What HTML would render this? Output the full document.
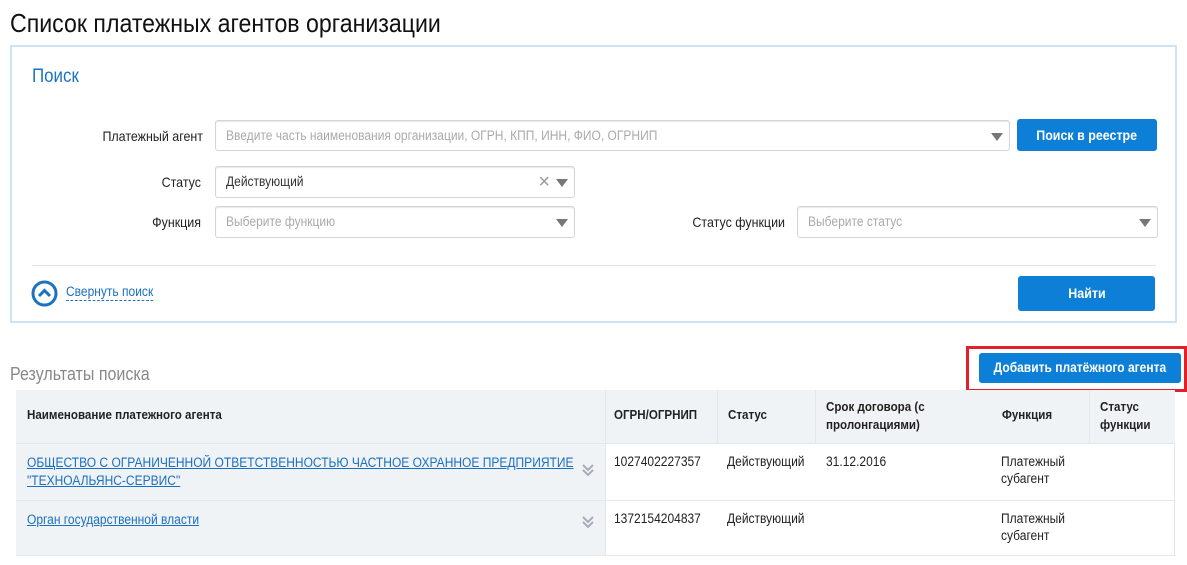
<!DOCTYPE html>
<html><head><meta charset="utf-8"><style>
*{box-sizing:border-box;margin:0;padding:0}
body{width:1187px;height:565px;background:#fff;position:relative;overflow:hidden;font-family:"Liberation Sans",sans-serif;color:#222}
.a{position:absolute;white-space:nowrap}
.t{transform:scaleX(.89);transform-origin:0 0}
.s{display:inline-block;transform:scaleX(.89);transform-origin:0 0;white-space:nowrap}
.inp{position:absolute;border:1px solid #d5d5d5;border-radius:3px;background:#fff;font-size:13.5px;line-height:29px;padding-left:10px;color:#aaa;box-shadow:inset 0 1px 1px rgba(0,0,0,.1)}
.tri{position:absolute;right:6px;top:12px;width:0;height:0;border-left:6px solid transparent;border-right:6px solid transparent;border-top:8px solid #777}
.lbl{position:absolute;font-size:14px;text-align:right;color:#222;transform:scaleX(.89);transform-origin:100% 0;white-space:nowrap}
.btn{position:absolute;background:#0e7fd6;color:#fff;border-radius:3px;font-size:14px;font-weight:bold;text-align:center}
.btn span{display:inline-block;transform:scaleX(.89)}
.c{position:absolute;font-size:13.5px;line-height:18px;white-space:nowrap;transform:scaleX(.89);transform-origin:0 0}
.hd{font-weight:bold;font-size:13px}
a{color:#1a6fc0;text-decoration:underline}
</style></head><body>
<div class="a t" style="left:10px;top:8px;font-size:26px;color:#111">Список платежных агентов организации</div>
<div class="a" style="left:10px;top:45px;width:1167px;height:278px;border:2px solid #cfe3f3"></div>
<div class="a t" style="left:32px;top:66px;font-size:19px;color:#1a73c0">Поиск</div>
<div class="lbl" style="left:60px;top:128px;width:143px">Платежный агент</div>
<div class="inp" style="left:215px;top:120px;width:795px;height:31px"><span class="s">Введите часть наименования организации, ОГРН, КПП, ИНН, ФИО, ОГРНИП</span><div class="tri"></div></div>
<div class="btn" style="left:1017px;top:119px;width:140px;height:32px;line-height:32px"><span>Поиск в реестре</span></div>
<div class="lbl" style="left:60px;top:174px;width:141px">Статус</div>
<div class="inp" style="left:215px;top:166px;width:360px;height:32px;color:#333"><span class="s">Действующий</span><span style="position:absolute;right:24px;top:0;color:#999;font-size:20px;line-height:30px">×</span><div class="tri"></div></div>
<div class="lbl" style="left:60px;top:214px;width:141px">Функция</div>
<div class="inp" style="left:215px;top:206px;width:360px;height:32px"><span class="s">Выберите функцию</span><div class="tri"></div></div>
<div class="lbl" style="left:600px;top:214px;width:185px">Статус функции</div>
<div class="inp" style="left:797px;top:206px;width:361px;height:32px"><span class="s">Выберите статус</span><div class="tri"></div></div>
<div class="a" style="left:32px;top:265px;width:1124px;height:1px;background:#e2e2e2"></div>
<svg class="a" style="left:31px;top:280px" width="27" height="27" viewBox="0 0 27 27"><circle cx="13.5" cy="13.5" r="11.5" fill="none" stroke="#1a73c0" stroke-width="3"/><path d="M8 16 L13.5 10.5 L19 16" fill="none" stroke="#1a73c0" stroke-width="3"/></svg>
<div class="a t" style="left:66px;top:284px;font-size:13.5px;color:#1a6fc0;border-bottom:1px dashed #1a6fc0;line-height:16px">Свернуть поиск</div>
<div class="btn" style="left:1018px;top:276px;width:137px;height:35px;line-height:35px"><span>Найти</span></div>
<div class="a t" style="left:10px;top:364px;font-size:18px;color:#888">Результаты поиска</div>
<div class="a" style="left:966px;top:346px;width:221px;height:46px;border:3px solid #e0202a"></div>
<div class="btn" style="left:979px;top:353px;width:202px;height:30px;line-height:30px;font-size:13.5px"><span>Добавить платёжного агента</span></div>
<div class="a" style="left:16px;top:390px;width:1159px;height:166px;border:1px solid #e3e8ee;border-top:none;background:#fff"></div>
<div class="a" style="left:16px;top:390px;width:1159px;height:53px;background:#f0f3f6"></div>
<div class="a" style="left:16px;top:443px;width:590px;height:112px;background:#f0f3f6"></div>
<div class="a" style="left:16px;top:443px;width:1159px;height:1px;background:#e3e8ee"></div>
<div class="a" style="left:16px;top:500px;width:1159px;height:1px;background:#e3e8ee"></div>
<div class="a" style="left:605px;top:390px;width:1px;height:165px;background:#e3e8ee"></div>
<div class="a" style="left:717px;top:390px;width:1px;height:53px;background:#e3e8ee"></div>
<div class="a" style="left:815px;top:390px;width:1px;height:53px;background:#e3e8ee"></div>
<div class="a" style="left:1089px;top:390px;width:1px;height:53px;background:#e3e8ee"></div>
<div class="c hd" style="left:27px;top:406px">Наименование платежного агента</div>
<div class="c hd" style="left:614px;top:406px">ОГРН/ОГРНИП</div>
<div class="c hd" style="left:728px;top:406px">Статус</div>
<div class="c hd" style="left:826px;top:398px">Срок договора (с<br>пролонгациями)</div>
<div class="c hd" style="left:1002px;top:406px">Функция</div>
<div class="c hd" style="left:1100px;top:398px">Статус<br>функции</div>
<div class="c" style="left:27px;top:454px;line-height:18px"><a>ОБЩЕСТВО С ОГРАНИЧЕННОЙ ОТВЕТСТВЕННОСТЬЮ ЧАСТНОЕ ОХРАННОЕ ПРЕДПРИЯТИЕ</a><br><a>"ТЕХНОАЛЬЯНС-СЕРВИС"</a></div>
<div class="c" style="left:614px;top:453px">1027402227357</div>
<div class="c" style="left:727px;top:453px">Действующий</div>
<div class="c" style="left:826px;top:453px">31.12.2016</div>
<div class="c" style="left:1001px;top:453px;line-height:17px">Платежный<br>субагент</div>
<div class="c" style="left:27px;top:511px"><a>Орган государственной власти</a></div>
<div class="c" style="left:614px;top:510px">1372154204837</div>
<div class="c" style="left:727px;top:510px">Действующий</div>
<div class="c" style="left:1001px;top:510px;line-height:17px">Платежный<br>субагент</div>
<svg class="a" style="left:581px;top:463px" width="14" height="14" viewBox="0 0 14 14"><path d="M2 2 L7 7 L12 2 M2 7 L7 12 L12 7" fill="none" stroke="#aab" stroke-width="2"/></svg>
<svg class="a" style="left:581px;top:515px" width="14" height="14" viewBox="0 0 14 14"><path d="M2 2 L7 7 L12 2 M2 7 L7 12 L12 7" fill="none" stroke="#aab" stroke-width="2"/></svg>
</body></html>
